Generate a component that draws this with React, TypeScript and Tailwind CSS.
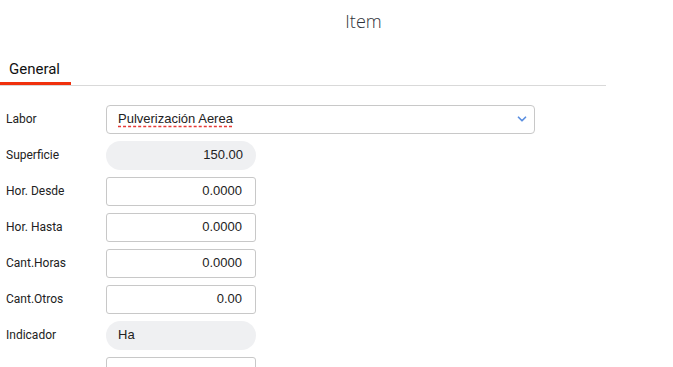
import { ChevronDown } from "lucide-react";

const rows: { label: string; value: string; kind: "input" | "pill" | "pillLeft" }[] = [
    { label: "Superficie", value: "150.00", kind: "pill" },
    { label: "Hor. Desde", value: "0.0000", kind: "input" },
    { label: "Hor. Hasta", value: "0.0000", kind: "input" },
    { label: "Cant.Horas", value: "0.0000", kind: "input" },
    { label: "Cant.Otros", value: "0.00", kind: "input" },
    { label: "Indicador", value: "Ha", kind: "pillLeft" },
    { label: "", value: "", kind: "input" },
];

function Field({ value, kind }: { value: string; kind: string }) {
    if (kind === "pill") {
        return (
            <div className="w-[150px] h-[29px] rounded-full bg-[#eff0f2] flex items-center justify-end pr-[13px] text-[13px] text-[#222]">
                {value}
            </div>
        );
    }
    if (kind === "pillLeft") {
        return (
            <div className="w-[150px] h-[29px] rounded-full bg-[#eff0f2] flex items-center pl-[12px] text-[13px] text-[#222]">
                {value}
            </div>
        );
    }
    return (
        <div className="w-[150px] h-[29px] rounded-[3px] border border-[#c8c8c8] bg-white flex items-center justify-end pr-[13px] text-[13px] text-[#222]">
            {value}
        </div>
    );
}

export default function App() {
    return (
        <div className="w-[673px] h-[367px] overflow-hidden bg-white font-['Liberation_Sans',Arial,sans-serif]">
            <div className="pl-[54px] pt-[8px] text-center text-[18px] font-light text-[#2f333a] font-['Open_Sans',sans-serif]">
                Item
            </div>
            <div className="w-[606px] mt-[23px] border-b border-[#d9d9d9] flex">
                <div className="w-[71px] border-b-[3px] border-[#f0300c] pl-[9px] pb-[1px] text-[15px] text-[#111] font-['Roboto',sans-serif]">
                    General
                </div>
            </div>
            <div className="pt-[19px] flex flex-col gap-[7px]">
                <div className="flex items-center">
                    <div className="w-[106px] pl-[6px] text-[12px] text-[#222] font-['Roboto',sans-serif]">Labor</div>
                    <div className="w-[429px] h-[29px] rounded-[4px] border border-[#c8c8c8] flex items-center pl-[11px] pr-[5px] text-[13px] text-[#222]">
                        <span className="flex-1 underline decoration-dashed decoration-[#e53935] underline-offset-[3px]">
                            Pulverización Aerea
                        </span>
                        <ChevronDown className="w-[14px] h-[14px] text-[#5b8fe0]" strokeWidth={3} />
                    </div>
                </div>
                {rows.map((r, i) => (
                    <div key={i} className="flex items-center">
                        <div className="w-[106px] pl-[6px] text-[12px] text-[#222] font-['Roboto',sans-serif]">{r.label}</div>
                        <Field value={r.value} kind={r.kind} />
                    </div>
                ))}
            </div>
        </div>
    );
}
